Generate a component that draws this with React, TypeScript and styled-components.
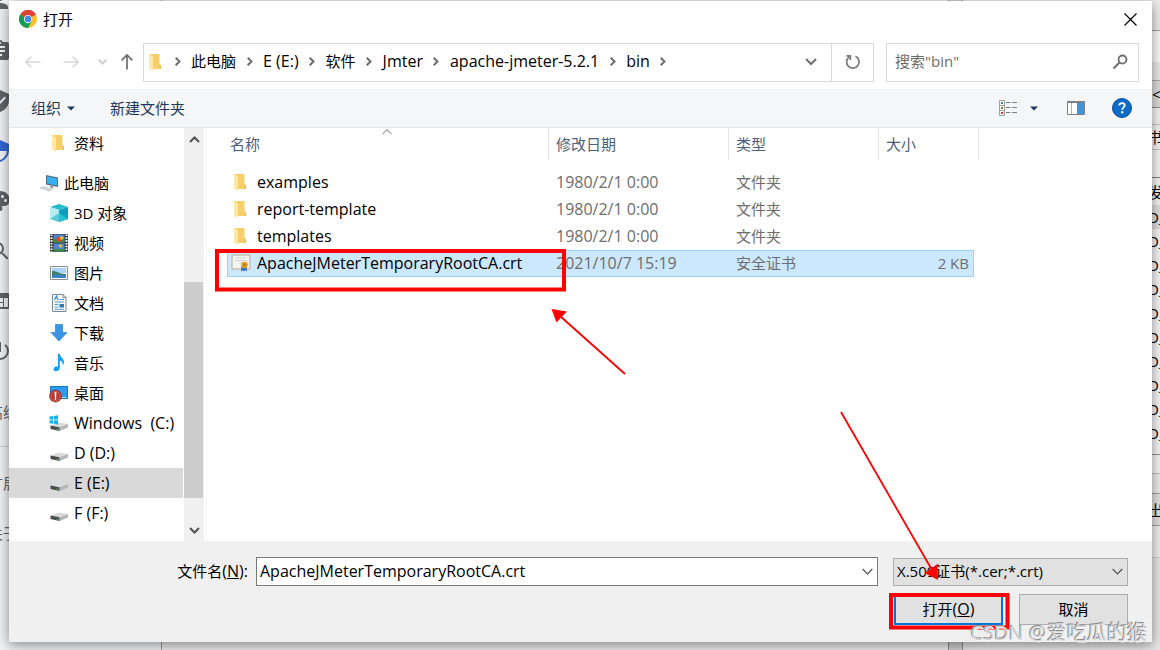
import React from 'react';
import styled, { createGlobalStyle, css } from 'styled-components';
import {
  MdPerson, MdAssignment, MdVerifiedUser, MdSecurity, MdPalette, MdSearch, MdWeb, MdPowerSettingsNew,
} from 'react-icons/md';

const Global = createGlobalStyle`
  * { box-sizing: border-box; }
  html, body { margin: 0; height: 100%; overflow: hidden; }
  #root { height: 100%; }
  body, button, input, select {
    font-family: "Open Sans", "Noto Sans CJK SC", sans-serif;
    font-size: 15px;
    line-height: 20px;
    color: #000;
  }
  button { border: 0; padding: 0; background: none; }
  ul, ol { list-style: none; margin: 0; padding: 0; }
`;

/* ---------- windows behind the dialog ---------- */

const Desktop = styled.div`
  position: relative;
  height: 100vh;
  overflow: hidden;
  background: #f1f1f1;
`;

const Backdrop = styled.div`
  display: flex;
  height: 100%;
`;

const SettingsMenu = styled.nav`
  width: 162px;
  flex: none;
  overflow: hidden;
  background: #f1f2f4;
  border-right: 1px solid #9a9a9a;
  color: #5f6368;
`;

const SettingsIcon = styled.div<{ $active?: boolean }>`
  height: 50px;
  margin-left: -12px;
  color: ${p => (p.$active ? '#3367d6' : '#5f6368')};
  svg { display: block; width: 24px; height: 24px; }
`;

const SettingsIcons = styled.div`
  margin-top: -11px;
  height: 403px;
`;

const SettingsLink = styled.div<{ $line?: boolean }>`
  height: ${p => (p.$line ? 55 : 50)}px;
  margin-left: -12px;
  margin-bottom: ${p => (p.$line ? 16 : 0)}px;
  line-height: 40px;
  white-space: nowrap;
  border-bottom: ${p => (p.$line ? '1px solid #cfd0d2' : '0')};
`;

const SettingsPage = styled.div`
  flex: 1;
  background: #ececec;
`;

const PageScroll = styled.div`
  width: 15px;
  background: #cfcfcf;
  border-left: 1px solid #8c8c8c;
  border-right: 1px solid #8c8c8c;
`;

const SidePanel = styled.div`
  width: 197px;
  flex: none;
  overflow: hidden;
  background: #e6e6e6;
`;

const PanelRow = styled.div<{ $height: number; $bg?: string; $line?: string }>`
  height: ${p => p.$height}px;
  padding-left: 185px;
  display: flex;
  align-items: center;
  white-space: nowrap;
  background: ${p => p.$bg || '#f4f4f4'};
  border-bottom: ${p => (p.$line ? `1px solid ${p.$line}` : '0')};
`;

/* ---------- dialog ---------- */

const Dialog = styled.section`
  position: absolute;
  inset: 1px 8px 8px 9px;
  display: flex;
  flex-direction: column;
  background: #fff;
  box-shadow: 0 3px 12px rgba(0, 0, 0, 0.45);
`;

const Latin = styled.span`
  font-size: 16px;
`;

const TitleBar = styled.header`
  height: 36px;
  display: flex;
  align-items: center;
  gap: 6px;
  padding: 0 14px 0 10px;
`;

const Title = styled.h1`
  flex: 1;
  margin: 0;
  font-size: 15px;
  font-weight: 400;
`;

const IconButton = styled.button<{ $width: number }>`
  width: ${p => p.$width}px;
  height: 100%;
  flex: none;
  display: flex;
  align-items: center;
  justify-content: center;
`;

const NavBar = styled.div`
  height: 52px;
  display: flex;
  align-items: center;
  padding: 0 13px 2px 9px;
`;

const Address = styled.div`
  flex: 1;
  height: 39px;
  display: flex;
  align-items: center;
  border: 1px solid #d9d9d9;
  padding-left: 2px;
`;

const Crumbs = styled.ol`
  flex: 1;
  display: flex;
  align-items: center;
  white-space: nowrap;
`;

const Crumb = styled.li`
  display: flex;
  align-items: center;
  padding-bottom: 2px;
`;

const CrumbArrow = styled.span`
  width: 27px;
  display: flex;
  justify-content: center;
`;

const Refresh = styled(IconButton)`
  border-left: 1px solid #d9d9d9;
`;

const SearchBox = styled.label`
  width: 253px;
  height: 39px;
  margin-left: 12px;
  padding: 0 8px;
  display: flex;
  align-items: center;
  border: 1px solid #d9d9d9;
`;

const BareInput = styled.input`
  flex: 1;
  min-width: 0;
  padding: 0 0 2px;
  border: 0;
  outline: 0;
  background: none;
  font-size: 16px;
  &::placeholder { color: #6d6d6d; opacity: 1; font-size: 15px; }
`;

const Toolbar = styled.div`
  height: 39px;
  display: flex;
  align-items: center;
  padding: 0 9px 0 22px;
  background: #f5f6f7;
  border-bottom: 1px solid #e6e7e8;
`;

const ToolButton = styled.button`
  display: flex;
  align-items: center;
  gap: 6px;
  margin-right: 35px;
  color: #1e395b;
`;

const ToolIcons = styled.div`
  margin-left: auto;
  display: flex;
  align-items: center;
`;

const Body = styled.div`
  flex: 1;
  min-height: 0;
  display: flex;
`;

const Tree = styled.ul`
  width: 174px;
  flex: none;
  overflow: hidden;
`;

const TreeItem = styled.li<{ $root?: boolean; $gap?: boolean; $selected?: boolean; $latin?: boolean }>`
  height: 30px;
  margin-bottom: ${p => (p.$gap ? 10 : 0)}px;
  padding-left: ${p => (p.$root ? 30 : 40)}px;
  display: flex;
  align-items: center;
  gap: 5px;
  white-space: pre;
  font-size: ${p => (p.$latin ? 16 : 15)}px;
  background: ${p => (p.$selected ? '#d9d9d9' : 'none')};
  svg { flex: none; }
`;

const ScrollBar = styled.div`
  width: 20px;
  margin-left: 1px;
  flex: none;
  display: flex;
  flex-direction: column;
  background: #f0f0f0;
`;

const ScrollEnd = styled.button`
  height: 22px;
  display: flex;
  align-items: center;
  justify-content: center;
`;

const ScrollTrack = styled.div`
  flex: 1;
  display: flex;
  flex-direction: column;
  justify-content: flex-end;
  padding: 0 1px 21px 0;
`;

const ScrollThumb = styled.div`
  height: 62%;
  background: #cdcdcd;
`;

const FilePane = styled.div`
  flex: 1;
  min-width: 0;
  margin-left: 2px;
  padding-left: 20px;
  border-left: 1px solid #f5f5f5;
`;

const FileTable = styled.table`
  display: block;
  width: 752px;
  thead, tbody { display: block; }
  tbody { padding: 9px 5px 0 0; }
`;

const rowGrid = css`
  display: grid;
  grid-template-columns: 322px 180px 150px 1fr;
`;

const HeadRow = styled.tr`
  ${rowGrid}
  height: 32px;
`;

const HeadCell = styled.th<{ $first?: boolean }>`
  position: relative;
  padding: 0 0 0 ${p => (p.$first ? 3 : 7)}px;
  display: flex;
  align-items: center;
  font-weight: 400;
  color: #4c607a;
  border-right: 1px solid #e5e5e5;
`;

const SortMark = styled.svg`
  position: absolute;
  top: 1px;
  left: calc(50% - 6px);
`;

const FileRow = styled.tr<{ $selected?: boolean }>`
  ${rowGrid}
  height: 27px;
  background: ${p => (p.$selected ? '#cce8ff' : 'none')};
  box-shadow: ${p => (p.$selected ? 'inset 0 0 0 1px #99d1ff' : 'none')};
`;

const Cell = styled.td<{ $kind: 'name' | 'date' | 'text' | 'size' }>`
  padding: 0 5px 2px ${p => (p.$kind === 'name' ? 4 : 7)}px;
  display: flex;
  align-items: center;
  gap: 6px;
  white-space: nowrap;
  font-size: ${p => (p.$kind === 'name' || p.$kind === 'date' ? 16 : 15)}px;
  justify-content: ${p => (p.$kind === 'size' ? 'flex-end' : 'flex-start')};
  color: ${p => (p.$kind === 'name' ? '#000' : '#6d6d6d')};
`;

const Footer = styled.footer`
  height: 101px;
  flex: none;
  padding: 16px 24px 0 0;
  background: #f0f0f0;
`;

const FieldRow = styled.div`
  display: flex;
  align-items: center;
`;

const FieldLabel = styled.label`
  width: 239px;
  flex: none;
  padding-bottom: 2px;
  text-align: right;
`;

const NameField = styled.div`
  flex: 1;
  height: 29px;
  margin-left: 8px;
  padding-left: 3px;
  display: flex;
  align-items: center;
  background: #fff;
  border: 1px solid #7a7a7a;
`;

const TypeField = styled.div`
  position: relative;
  width: 235px;
  height: 28px;
  margin-left: 15px;
`;

const TypeSelect = styled.select`
  width: 100%;
  height: 100%;
  padding: 0 20px 2px 3px;
  appearance: none;
  border: 1px solid #adadad;
  border-radius: 0;
  background: #e1e1e1;
`;

const TypeArrow = styled.span`
  position: absolute;
  inset: 0 5px 0 auto;
  display: flex;
  align-items: center;
  pointer-events: none;
`;

const Actions = styled.div`
  display: flex;
  justify-content: flex-end;
  gap: 16px;
  margin-top: 8px;
`;

const ActionButton = styled.button<{ $primary?: boolean }>`
  width: 109px;
  height: 31px;
  padding-bottom: 2px;
  background: #e1e1e1;
  border: ${p => (p.$primary ? '2px solid #0078d7' : '1px solid #adadad')};
`;

const Annotations = styled.svg`
  position: absolute;
  inset: 0;
  pointer-events: none;
`;

const Watermark = styled.div`
  position: absolute;
  right: 13px;
  bottom: 3px;
  font-size: 20px;
  line-height: 28px;
  color: #d8d8d8;
  text-shadow: -1px -1px 0 #8a8a8a, 1px 1px 0 #f8f8f8;
  white-space: nowrap;
`;

const Grip = styled.svg`
  position: absolute;
  right: 4px;
  bottom: 3px;
`;

/* ---------- drawings ---------- */

const Chrome = () => (
  <svg width="18" height="18" viewBox="0 0 48 48" aria-hidden="true">
    <circle cx="24" cy="24" r="24" fill="#fbc02d" />
    <path d="M24 24 L3.2 12 A24 24 0 0 1 44.8 12 Z" fill="#db4437" />
    <path d="M24 13 H45.3 A24 24 0 0 0 24 0Z" fill="#db4437" />
    <path d="M3.2 12 A24 24 0 0 0 24 48 L34 30 L24 24Z" fill="#0f9d58" />
    <circle cx="24" cy="24" r="11" fill="#f1f1f1" />
    <circle cx="24" cy="24" r="8.6" fill="#4285f4" />
  </svg>
);

const Chevron = ({ d, w, h, color = '#6d6d6d', sw = 2 }: { d: string; w: number; h: number; color?: string; sw?: number }) => (
  <svg width={w} height={h} viewBox={`0 0 ${w} ${h}`} aria-hidden="true">
    <path d={d} fill="none" stroke={color} strokeWidth={sw} />
  </svg>
);

const Arrow = ({ turn, color }: { turn: number; color: string }) => (
  <svg width="16" height="16" viewBox="0 0 16 16" aria-hidden="true">
    <g transform={`rotate(${turn} 8 8)`} fill="none" stroke={color} strokeWidth="1.7">
      <path d="M0.8 8H15.5M6.3 2.6L0.9 8L6.3 13.4" />
    </g>
  </svg>
);

const FolderIcon = ({ width = 18 }: { width?: number }) => (
  <svg width={width} height="18" viewBox="0 0 18 18" preserveAspectRatio="xMinYMid meet" aria-hidden="true">
    <path d="M3 1h10.500v10.500l1.500 1.500v3H6z" fill="#f6cf6b" />
    <path d="M3 1l4 2.500V18L3 16z" fill="#ffe9a6" />
    <path d="M13.500 11l1.500 1v4h-1.500z" fill="#efc050" />
  </svg>
);

const Triangle = () => (
  <svg width="8" height="5" viewBox="0 0 8 5" aria-hidden="true">
    <path d="M0 0.500h8L4 4.500z" fill="#1e395b" />
  </svg>
);

const Drive = ({ windows }: { windows?: boolean }) => (
  <svg width="20" height="20" viewBox="0 0 20 20" aria-hidden="true">
    <path d="M1.500 12.500L10 9.500L19 11L10.500 14.300z" fill="#d9dadc" />
    <path d="M10.500 14.300L19 11V14.500L10.500 18z" fill="#b4b5b8" />
    <path d="M1.500 12.500L10.500 14.300V18L1.500 16z" fill="#4b4d4e" />
    <path d="M7.500 15.500l2 .4v1l-2-.4z" fill="#45c34a" />
    {windows && (
      <path d="M0.500 3.600L4 3v3.500H.5zM4.800 2.900L9 2.300V6.500H4.800zM.5 7.300H4V10.800L.5 10.300zM4.800 7.300H9V11.400L4.800 10.800z" fill="#14b4ee" />
    )}
  </svg>
);

const PcIcon = () => (
  <svg width="20" height="20" viewBox="0 0 20 20" aria-hidden="true">
    <path d="M7 2L19 4.500V14L7 11.500z" fill="#5c6b78" />
    <path d="M8 3.300L18.200 5.400V12.800L8 10.600z" fill="#35aef3" />
    <path d="M11 12.500l3.500.8v2l-3.500-.8z" fill="#9aa2a8" />
    <path d="M1 14.500l4-1.500l9 2.500l-3.500 2.500z" fill="#d5d9dc" />
    <path d="M1 14.500l9.500 3.500l3.500-2.500" fill="none" stroke="#b0b5b9" strokeWidth=".7" />
  </svg>
);

const CubeIcon = () => (
  <svg width="20" height="20" viewBox="0 0 20 20" aria-hidden="true">
    <path d="M10 1L19 4L10 7L1 4z" fill="#27bcd0" />
    <path d="M1 4L10 7V19L1 16z" fill="#b4eef0" />
    <path d="M1 16L10 10V19z" fill="#58cdd8" />
    <path d="M10 7L19 4V16L10 19z" fill="#0a9fc0" />
    <path d="M10 10L19 16L10 19z" fill="#28c0d4" />
  </svg>
);

const VideoIcon = () => (
  <svg width="20" height="20" viewBox="0 0 20 20" aria-hidden="true">
    <path d="M1 1h18v18H1z" fill="#333" />
    <path d="M2.500 1.500v17.500M17.500 1.500v17.500" stroke="#fff" strokeWidth="2" strokeDasharray="1.600 1.200" />
    <path d="M4.500 1.500h11v8h-11zM4.500 10.500h11v8h-11z" fill="#4d86d8" />
    <path d="M4.500 6h11v3.500h-11zM4.500 16h11v2.500h-11z" fill="#3c8d3f" />
    <circle cx="10" cy="6" r="2.600" fill="#e6402d" />
    <circle cx="12.500" cy="5" r="1.800" fill="#f4c62d" />
    <circle cx="11.500" cy="13" r="1.800" fill="#e8b92c" />
  </svg>
);

const PictureIcon = () => (
  <svg width="20" height="20" viewBox="0 0 20 20" aria-hidden="true">
    <path d="M1.500 3.500h17v13h-17z" fill="#fff" stroke="#8a8f94" />
    <path d="M3 5h14v5H3z" fill="#a8d5f5" />
    <path d="M3 8c4-.5 6 2.500 14 3v4H3z" fill="#3d7f70" />
    <path d="M3 12.500q7-1.500 14 0V15H3z" fill="#3b83c4" />
  </svg>
);

const DocIcon = () => (
  <svg width="20" height="20" viewBox="0 0 20 20" aria-hidden="true">
    <path d="M3.500 1.500h10.500l3 3V18.500h-13.500z" fill="#fafafa" stroke="#80868b" />
    <path d="M14 1.500v3h3" fill="none" stroke="#80868b" />
    <path d="M5.500 7l2-4l1.500 4" fill="none" stroke="#1f8fd6" strokeWidth="1.200" />
    <path d="M10.500 6.500h4.500M5.500 9h9.500M5.500 11.500h4M5.500 14h4M5.500 16.300h9.500" stroke="#4f9bd2" />
    <path d="M10.500 11h4.500v3.500h-4.500z" fill="#2f78b5" />
  </svg>
);

const DownloadIcon = () => (
  <svg width="20" height="20" viewBox="0 0 20 20" aria-hidden="true">
    <path d="M6.500 1.500h7v8h4.500L10 18L2 9.500h4.500z" fill="#3a96e4" stroke="#2b80cc" strokeWidth=".7" />
  </svg>
);

const MusicIcon = () => (
  <svg width="20" height="20" viewBox="0 0 20 20" aria-hidden="true">
    <path d="M9 1h1.800c.4 3.500 4.200 4 4.200 8c0 1.500-.6 2.700-1.300 3.600c.5-3.100-1.200-4.800-2.900-5.200V15c0 2-2.200 3.500-4.300 3.300S4 16 5 14.800s2.700-1.600 4-1z" fill="#0f9ff5" />
  </svg>
);

const DesktopIcon = () => (
  <svg width="20" height="20" viewBox="0 0 20 20" aria-hidden="true">
    <path d="M1.500 3.500h17v12h-17z" fill="#2b9df2" stroke="#1476c4" />
    <path d="M13 14.500h1.500M15.500 14.500h1.500" stroke="#fff" />
    <circle cx="6.500" cy="13" r="6" fill="#b8352b" stroke="#8c241c" strokeWidth=".6" />
    <circle cx="6.500" cy="13" r="4.600" fill="none" stroke="#dd8177" strokeWidth=".6" />
    <path d="M5.600 9h1.800l-.3 8h-1.200z" fill="#fff" />
  </svg>
);

const CertIcon = () => (
  <svg width="20" height="19" viewBox="0 0 20 19" aria-hidden="true">
    <path d="M1 2h18v14H1z" fill="#f6f4ee" stroke="#c9bfae" strokeWidth="1.400" />
    <path d="M5 5h10M4 7.500h12M8 10h3" stroke="#c3cad2" strokeWidth=".8" />
    <path d="M10.500 13l-.5 5.500l2-1.200l1 1.200l1-1.200l2 1.200l-.5-5.500z" fill="#2f6fd0" />
    <circle cx="13.500" cy="12" r="3.300" fill="#e0a21a" />
    <circle cx="13.500" cy="12" r="1.400" fill="#b97a0b" />
  </svg>
);

/* ---------- data ---------- */

const settingsIcons = [MdPerson, MdAssignment, MdVerifiedUser, MdSecurity, MdPalette, MdSearch, MdWeb, MdPowerSettingsNew];

const crumbs = ['此电脑', 'E (E:)', '软件', 'Jmter', 'apache-jmeter-5.2.1', 'bin'];

const isLatin = (s: string) => s.charCodeAt(0) < 128 && s.charCodeAt(s.length - 1) < 128;

const tree: { label: string; icon: React.ReactNode; root?: boolean; gap?: boolean; selected?: boolean }[] = [
  { label: '资料', icon: <FolderIcon width={20} />, gap: true },
  { label: '此电脑', icon: <PcIcon />, root: true },
  { label: '3D 对象', icon: <CubeIcon /> },
  { label: '视频', icon: <VideoIcon /> },
  { label: '图片', icon: <PictureIcon /> },
  { label: '文档', icon: <DocIcon /> },
  { label: '下载', icon: <DownloadIcon /> },
  { label: '音乐', icon: <MusicIcon /> },
  { label: '桌面', icon: <DesktopIcon /> },
  { label: 'Windows  (C:)', icon: <Drive windows /> },
  { label: 'D (D:)', icon: <Drive /> },
  { label: 'E (E:)', icon: <Drive />, selected: true },
  { label: 'F (F:)', icon: <Drive /> },
];

const files = [
  { name: 'examples', date: '1980/2/1 0:00', type: '文件夹', size: '' },
  { name: 'report-template', date: '1980/2/1 0:00', type: '文件夹', size: '' },
  { name: 'templates', date: '1980/2/1 0:00', type: '文件夹', size: '' },
  { name: 'ApacheJMeterTemporaryRootCA.crt', date: '2021/10/7 15:19', type: '安全证书', size: '2 KB', cert: true },
];

const panelRows = Array.from({ length: 10 }, (_, i) => i);

export default function App() {
  return (
    <Desktop>
      <Global />
      <Backdrop aria-hidden="true">
        <SettingsMenu>
          <SettingsIcons>
            {settingsIcons.map((Icon, i) => (
              <SettingsIcon key={i} $active={i === 3}><Icon /></SettingsIcon>
            ))}
          </SettingsIcons>
          <SettingsLink $line>高级</SettingsLink>
          <SettingsLink>扩展</SettingsLink>
          <SettingsLink>关于</SettingsLink>
        </SettingsMenu>
        <SettingsPage />
        <PageScroll />
        <SidePanel>
          <PanelRow $height={31} $line="#a0a0a0" $bg="#ededed" />
          <PanelRow $height={31} $bg="#fafafa" />
          <PanelRow $height={19} $line="#a8a8a8" $bg="#e9e9e9" />
          <PanelRow $height={27} $line="#909090" $bg="#dcdcdc">&nbsp;&lt;</PanelRow>
          <PanelRow $height={17} $line="#c8c8c8" />
          <PanelRow $height={25} $line="#c8c8c8">书签</PanelRow>
          <PanelRow $height={28} $line="#808080" />
          <PanelRow $height={27}>发</PanelRow>
          {panelRows.map(i => (
            <PanelRow key={i} $height={24} $bg={i === 0 ? '#dedede' : undefined}>D_</PanelRow>
          ))}
          <PanelRow $height={10} $line="#909090" />
          <PanelRow $height={19} $line="#c0c0c0" />
          <PanelRow $height={20} $line="#a0a0a0" $bg="#ececec" />
          <PanelRow $height={32} $line="#a0a0a0" $bg="#e1e1e1">出</PanelRow>
          <PanelRow $height={32} $line="#d0d0d0" $bg="#f0f0f0" />
        </SidePanel>
      </Backdrop>

      <Dialog role="dialog" aria-label="打开">
        <TitleBar>
          <Chrome />
          <Title>打开</Title>
          <IconButton $width={15} aria-label="关闭">
            <Chevron w={13} h={13} d="M0.500 0.500L12.500 12.500M12.500 0.500L0.500 12.500" color="#000" sw={1.2} />
          </IconButton>
        </TitleBar>

        <NavBar>
          <IconButton $width={30} aria-label="后退"><Arrow turn={0} color="#d9d9d9" /></IconButton>
          <IconButton $width={46} aria-label="前进"><Arrow turn={180} color="#d9d9d9" /></IconButton>
          <IconButton $width={16} aria-label="最近位置"><Chevron w={9} h={6} d="M0.700 0.700L4.500 4.500L8.300 0.700" color="#cfcfcf" /></IconButton>
          <IconButton $width={33} aria-label="上移"><Arrow turn={90} color="#6d6d6d" /></IconButton>
          <Address>
            <FolderIcon />
            <Crumbs>
              <Crumb><CrumbArrow><Chevron w={6} h={9} d="M0.700 0.700L4.500 4.500L0.700 8.300" /></CrumbArrow></Crumb>
              {crumbs.map(c => (
                <Crumb key={c}>
                  {isLatin(c) ? <Latin>{c}</Latin> : c}
                  <CrumbArrow><Chevron w={6} h={9} d="M0.700 0.700L4.500 4.500L0.700 8.300" /></CrumbArrow>
                </Crumb>
              ))}
            </Crumbs>
            <IconButton $width={41} aria-label="历史记录"><Chevron w={12} h={8} d="M1 1L6 6L11 1" /></IconButton>
            <Refresh $width={42} aria-label="刷新">
              <svg width="16" height="16" viewBox="0 0 16 16" aria-hidden="true">
                <path d="M10.500 2.300A6.200 6.200 0 1 1 4.200 2.900M1.500 1.800H5.300V6" fill="none" stroke="#7a7a7a" strokeWidth="1.700" />
              </svg>
            </Refresh>
          </Address>
          <SearchBox>
            <BareInput type="text" placeholder={'搜索"bin"'} aria-label="搜索" />
            <svg width="18" height="16" viewBox="0 0 18 16" aria-hidden="true">
              <circle cx="10.500" cy="5.500" r="4" fill="none" stroke="#6d6d6d" strokeWidth="1.800" />
              <path d="M7.500 8.500L1.500 14.500" stroke="#6d6d6d" strokeWidth="2" />
            </svg>
          </SearchBox>
        </NavBar>

        <Toolbar>
          <ToolButton>组织 <Triangle /></ToolButton>
          <ToolButton>新建文件夹</ToolButton>
          <ToolIcons>
            <IconButton $width={18} aria-label="视图">
              <svg width="18" height="16" viewBox="0 0 18 16" aria-hidden="true">
                <path d="M0.500 0.500h5v15h-5zM.5 5.500h5M.5 10.500h5" fill="#fff" stroke="#a0a0a0" />
                <path d="M2 2h2v2H2z" fill="#3c79b8" />
                <path d="M2 7h2v2H2z" fill="#7a7a35" />
                <path d="M2 12h2v2H2z" fill="#d0342c" />
                <path d="M7 2.500h4.500M13 2.500h5M7 7.500h4.500M13 7.500h5M7 12.500h4.500M13 12.500h5" stroke="#7d7d7d" />
              </svg>
            </IconButton>
            <IconButton $width={34} aria-label="更多视图"><Triangle /></IconButton>
            <IconButton $width={50} aria-label="预览窗格">
              <svg width="18" height="14" viewBox="0 0 18 14" aria-hidden="true">
                <path d="M0.500 0.500h17v13H.5z" fill="#fff" stroke="#808080" />
                <path d="M0 0h18v2H0z" fill="#808080" />
                <path d="M4.500 2v11" stroke="#b0b0b0" />
                <path d="M10 2h7v11h-7z" fill="#3b96e0" />
              </svg>
            </IconButton>
            <IconButton $width={42} aria-label="帮助">
              <svg width="20" height="20" viewBox="0 0 20 20" aria-hidden="true">
                <circle cx="10" cy="10" r="9.500" fill="#0b6bcb" stroke="#0a4f94" />
                <path d="M7.300 7.600c0-3.400 5.400-3.200 5.400-.2c0 2-2.500 2-2.500 4.400" fill="none" stroke="#fff" strokeWidth="1.800" />
                <circle cx="10.200" cy="14.300" r="1.200" fill="#fff" />
              </svg>
            </IconButton>
          </ToolIcons>
        </Toolbar>

        <Body>
          <Tree>
            {tree.map(t => (
              <TreeItem key={t.label} $root={t.root} $gap={t.gap} $selected={t.selected} $latin={isLatin(t.label)}>
                {t.icon}
                {t.label}
              </TreeItem>
            ))}
          </Tree>
          <ScrollBar>
            <ScrollEnd aria-label="向上滚动"><Chevron w={11} h={7} d="M1 6L5.500 1.500L10 6" color="#505050" /></ScrollEnd>
            <ScrollTrack><ScrollThumb /></ScrollTrack>
            <ScrollEnd aria-label="向下滚动"><Chevron w={11} h={7} d="M1 1L5.500 5.500L10 1" color="#505050" /></ScrollEnd>
          </ScrollBar>
          <FilePane>
            <FileTable>
              <thead>
                <HeadRow>
                  <HeadCell $first>
                    名称
                    <SortMark width="10" height="6" viewBox="0 0 10 6" aria-hidden="true">
                      <path d="M0.500 5L5 0.700L9.500 5" fill="none" stroke="#6d6d6d" />
                    </SortMark>
                  </HeadCell>
                  <HeadCell>修改日期</HeadCell>
                  <HeadCell>类型</HeadCell>
                  <HeadCell>大小</HeadCell>
                </HeadRow>
              </thead>
              <tbody>
                {files.map(f => (
                  <FileRow key={f.name} $selected={f.cert}>
                    <Cell $kind="name">{f.cert ? <CertIcon /> : <FolderIcon width={20} />}{f.name}</Cell>
                    <Cell $kind="date">{f.date}</Cell>
                    <Cell $kind="text">{f.type}</Cell>
                    <Cell $kind="size">{f.size}</Cell>
                  </FileRow>
                ))}
              </tbody>
            </FileTable>
          </FilePane>
        </Body>

        <Footer>
          <FieldRow>
            <FieldLabel htmlFor="file-name">文件名<Latin>(<u>N</u>):</Latin></FieldLabel>
            <NameField>
              <BareInput id="file-name" type="text" defaultValue="ApacheJMeterTemporaryRootCA.crt" />
              <IconButton $width={20} aria-label="历史文件名"><Chevron w={11} h={7} d="M0.700 1L5.500 5.800L10.300 1" color="#505050" sw={1.2} /></IconButton>
            </NameField>
            <TypeField>
              <TypeSelect aria-label="文件类型"><option>X.509证书(*.cer;*.crt)</option></TypeSelect>
              <TypeArrow><Chevron w={11} h={7} d="M0.700 1L5.500 5.800L10.300 1" color="#505050" sw={1.2} /></TypeArrow>
            </TypeField>
          </FieldRow>
          <Actions>
            <ActionButton $primary>打开<Latin>(<u>O</u>)</Latin></ActionButton>
            <ActionButton>取消</ActionButton>
          </Actions>
        </Footer>
        <Grip width="8" height="12" viewBox="0 0 8 12" aria-hidden="true">
          <path d="M5 0h2v2H5zM5 4h2v2H5zM5 8h2v2H5zM1 4h2v2H1zM1 8h2v2H1z" fill="#b5b5b5" />
        </Grip>
      </Dialog>

      <Annotations width="1160" height="650" viewBox="0 0 1160 650" aria-hidden="true">
        <g fill="none" stroke="#fe0000" strokeWidth="4">
          <rect x="217" y="251" width="347" height="38.500" />
          <rect x="891" y="595" width="116.500" height="32.500" />
        </g>
        <g stroke="#fe0000" strokeWidth="1.800" fill="#fe0000">
          <path d="M625 374L560 316" />
          <path d="M841 412L932 570" />
        </g>
        <path d="M551.500 309L567 311.500L556.500 322.500zM938 580L937.500 564L924.500 573z" fill="#fe0000" />
      </Annotations>
      <Watermark>CSDN @爱吃瓜的猴</Watermark>
    </Desktop>
  );
}
